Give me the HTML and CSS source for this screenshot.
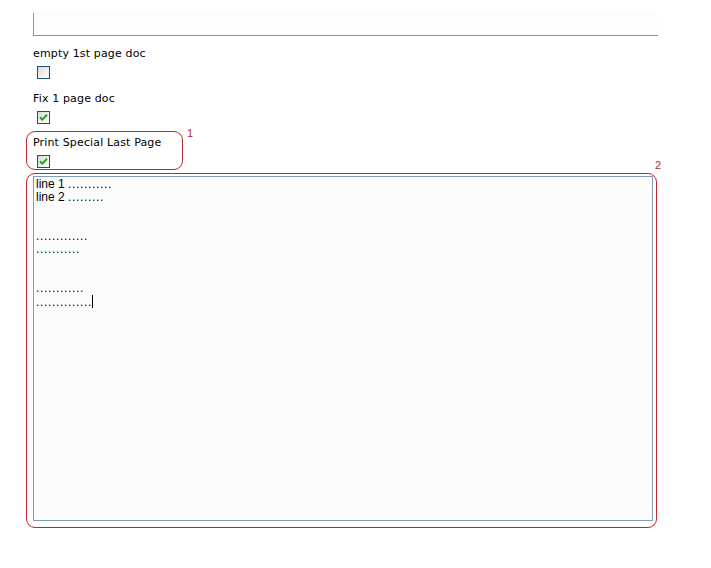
FILE: index.html
```html
<!DOCTYPE html>
<html>
<head>
<meta charset="utf-8">
<link rel="stylesheet" href="styles.css">
</head>
<body>
<div class="page">
  <div class="topbox"></div>
  <div class="field first">
    <div class="label">empty 1st page doc</div>
    <span class="cb"></span>
  </div>
  <div class="field">
    <div class="label">Fix 1 page doc</div>
    <span class="cb"><svg viewBox="0 0 11 11" width="11" height="11"><path d="M2 5.2 L4.3 7.6 L9 2.8" fill="none" stroke="#21a121" stroke-width="2"/></svg></span>
  </div>
  <div class="field last">
    <div class="label">Print Special Last Page</div>
    <span class="cb"><svg viewBox="0 0 11 11" width="11" height="11"><path d="M2 5.2 L4.3 7.6 L9 2.8" fill="none" stroke="#21a121" stroke-width="2"/></svg></span>
  </div>
  <div class="memo">line 1 <span class="dots">...........</span>
line 2 <span class="dots">.........</span>


<span class="dots">.............</span>
<span class="dots">...........</span>


<span class="dots">............</span>
<span class="dots">..............</span><span class="caret"></span></div>

  <div class="mark mark1"></div>
  <div class="num num1">1</div>
  <div class="mark mark2"></div>
  <div class="num num2">2</div>
</div>
</body>
</html>
```

FILE: styles.css
```css
html, body {
  margin: 0;
  padding: 0;
  background: #ffffff;
}
.page {
  position: relative;
  padding: 13px 0 0 33px;
  height: 555px;
  font-family: "DejaVu Sans", Verdana, sans-serif;
  font-size: 11px;
  color: #000;
}
.topbox {
  width: 624px;
  height: 22px;
  border-left: 1px solid #8a979f;
  border-bottom: 1px solid #8a979f;
  background: #fdfdfd;
}
.field {
  margin-top: 13px;
}
.field.first {
  margin-top: 11px;
}
.field.last {
  margin-top: 12px;
}
.label {
  line-height: 13px;
  height: 13px;
  letter-spacing: 0.15px;
  white-space: nowrap;
}
.cb {
  display: block;
  box-sizing: border-box;
  width: 13px;
  height: 13px;
  margin: 6px 0 0 4px;
  border: 1px solid #1c5180;
  background: linear-gradient(135deg, #dcdcd6 0%, #f2f2ee 60%, #ffffff 100%);
}
.cb svg {
  display: block;
}
.memo {
  box-sizing: border-box;
  margin-top: 8px;
  width: 620px;
  height: 345px;
  border: 1px solid #7f9db9;
  background: #fcfcfc;
  padding: 1px 2px;
  font-family: "Liberation Sans", Arial, sans-serif;
  font-size: 12px;
  line-height: 13px;
  white-space: pre;
}
.dots {
  letter-spacing: 0.67px;
}
.caret {
  display: inline-block;
  width: 1px;
  height: 13px;
  background: #000;
  vertical-align: -2px;
}
.mark {
  position: absolute;
  border: 1px solid #c0262c;
  border-radius: 9px;
  box-sizing: border-box;
}
.mark1 {
  left: 26px;
  top: 131px;
  width: 157px;
  height: 39px;
}
.mark2 {
  left: 26px;
  top: 173px;
  width: 631px;
  height: 355px;
}
.num {
  position: absolute;
  color: #c0262c;
  font-family: "Liberation Sans", Arial, sans-serif;
  font-size: 11px;
  line-height: 12px;
}
.num1 {
  left: 187px;
  top: 127px;
}
.num2 {
  left: 655px;
  top: 159px;
}
```
